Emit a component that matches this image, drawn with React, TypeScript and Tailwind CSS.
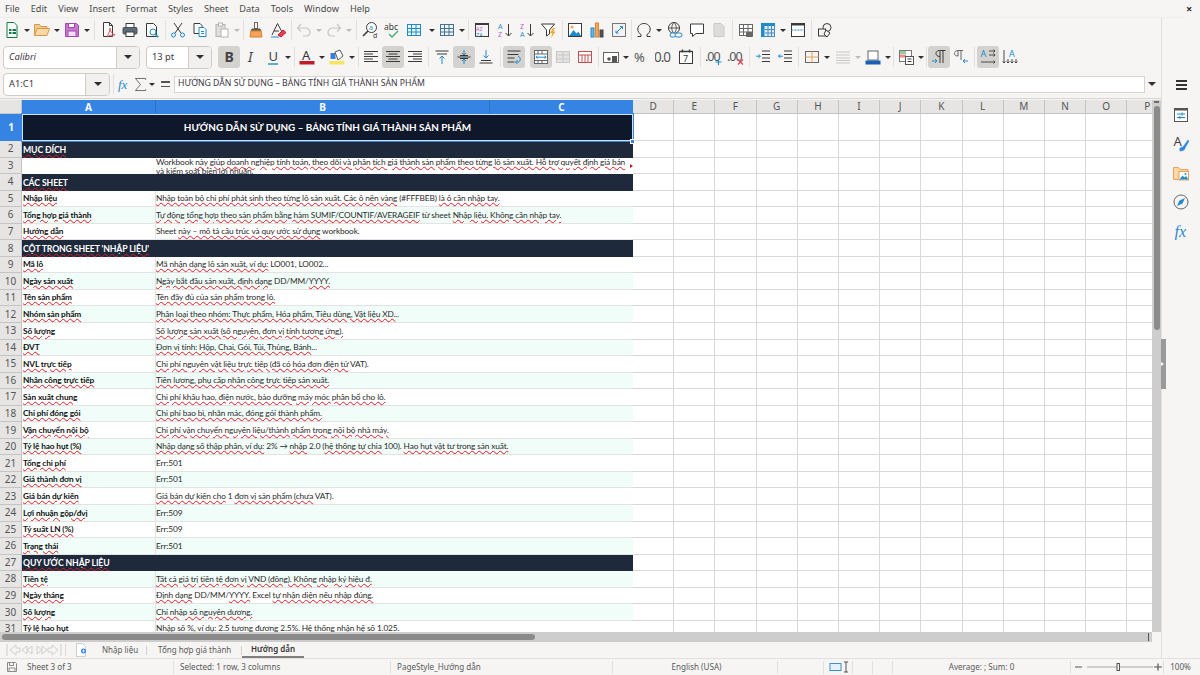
import type { ReactNode } from "react";

const UI = "font-['Noto_Sans',sans-serif]";
const INK = "#3a3a38";
const BLUE = "#1e8bcd";

// ---- toolbar primitives ----
function Btn({ on, children }: { on?: boolean; children: ReactNode }) {
  return (
    <div className={`flex h-[22px] w-[22px] shrink-0 items-center justify-center rounded-[3px] ${on ? "bg-[#d4d2cf]" : ""}`}>
      <svg viewBox="0 0 18 18" className="h-[18px] w-[18px]" fill="none" stroke={INK} strokeWidth="1">
        {children}
      </svg>
    </div>
  );
}

function Dd({ dim }: { dim?: boolean }) {
  return (
    <div className="flex h-[22px] w-[8px] shrink-0 items-center justify-center">
      <div className={`h-0 w-0 border-x-[3px] border-t-[3px] border-x-transparent ${dim ? "border-t-[#bbbbbb]" : "border-t-[#2e2e2e]"}`} />
    </div>
  );
}

function Sep({ w }: { w: string }) {
  return (
    <div className={`flex h-[22px] shrink-0 items-center justify-center ${w}`}>
      <div className="h-[20px] w-px bg-[#e2e0dd]" />
    </div>
  );
}

function Combo({ w, drop, text, italic }: { w: string; drop: string; text: string; italic?: boolean }) {
  return (
    <div className={`flex h-[23px] shrink-0 overflow-hidden rounded-[4px] border border-[#cfcbc6] bg-white ${w}`}>
      <div className={`flex flex-1 items-center pl-[5px] text-[9.300px] text-[#3d3846] ${italic ? "italic" : ""}`}>{text}</div>
      <div className={`flex items-center justify-center border-l border-[#cfcbc6] bg-[#f1f0ee] ${drop}`}>
        <div className="h-0 w-0 border-x-[4px] border-t-[4px] border-x-transparent border-t-[#2e2e2e]" />
      </div>
    </div>
  );
}

const Lines = ({ rows }: { rows: [number, number][] }) => (
  <>
    {rows.map(([a, b], i) => (
      <path key={i} d={`M${a} ${3.5 + i * 2.5}H${b}`} />
    ))}
  </>
);

const TableGlyph = ({ c = INK, fill }: { c?: string; fill?: string }) => (
  <g stroke={c}>
    <rect x="2.5" y="3.5" width="13" height="11" fill={fill ?? "none"} />
    <path d="M2.5 7.5h13M2.5 11h13M6.5 3.5v11M11 3.5v11" />
  </g>
);

function ToolbarOne() {
  return (
    <div className="flex h-[24px] items-center pl-px">
      <Btn>
        <path d="M4 1.5h7l3 3v12H4z" stroke="#107c41" fill="#fff" />
        <rect x="6" y="8" width="7" height="5" fill="#107c41" stroke="none" />
        <path d="M9 8v5M6 10.5h7" stroke="#fff" />
      </Btn>
      <Dd />
      <Btn>
        <path d="M1.5 14.5v-11h5l1.5 2h6v2" stroke="#d49a4a" fill="#f6c98a" />
        <path d="M1.5 14.5l2.5-7h12.5l-2.5 7z" stroke="#d49a4a" fill="#fbd9a6" />
      </Btn>
      <Dd />
      <Btn>
        <path d="M2.5 2.5h11l2 2v11h-13z" fill="#c678c9" stroke="#a347ba" />
        <rect x="5.5" y="2.5" width="6" height="4" fill="#fff" stroke="#a347ba" />
        <rect x="5" y="10" width="8" height="5.5" fill="#f3ddf4" stroke="#a347ba" />
      </Btn>
      <Dd />
      <Sep w="w-[6px]" />
      <Btn>
        <path d="M4.5 1.5h6l3 3v11h-9z" fill="#fff" />
        <path d="M10.5 1.5v3h3" />
        <path d="M8 15c2-2 3-6 3-8 0 3 2 6 5 7-3 0-6 0-8 2" stroke="#e0525d" />
      </Btn>
      <Btn>
        <rect x="5" y="2.5" width="8" height="4" fill="#fff" />
        <rect x="2" y="6.5" width="14" height="6.5" rx="1" fill="#5e6a76" stroke="#4a545e" />
        <rect x="5" y="11" width="8" height="4.5" fill="#fff" />
      </Btn>
      <Btn>
        <path d="M3.5 2.5h7l3 3v10h-10z" fill="#fff" />
        <circle cx="10" cy="11" r="3" stroke={BLUE} />
        <path d="M12.3 13.3l3 3" stroke={BLUE} strokeWidth="1.5" />
      </Btn>
      <Sep w="w-[4px]" />
      <Btn>
        <path d="M5 2l7 10M13 2L6 12" />
        <circle cx="4.5" cy="14" r="2" stroke={BLUE} />
        <circle cx="13.5" cy="14" r="2" stroke={BLUE} />
      </Btn>
      <Btn>
        <path d="M3 2.5h6l2 2v8H3z" fill="#fff" />
        <path d="M8 6.5h5l2 2v7H8z" fill="#fff" stroke={BLUE} />
        <path d="M10 10.5h3M10 12.5h3" stroke={BLUE} />
      </Btn>
      <Btn>
        <g stroke="#b4b4b4">
          <rect x="3" y="3.5" width="9" height="12" fill="#dedede" />
          <rect x="5.5" y="2" width="4" height="3" fill="#fff" />
          <rect x="8" y="8" width="7" height="8" fill="#fff" />
        </g>
      </Btn>
      <Dd dim />
      <Sep w="w-[4px]" />
      <Btn>
        <rect x="7.5" y="1.5" width="3" height="6" stroke="#7a6a55" />
        <path d="M5 8h8l1 2H4z" fill="#6c6a66" stroke="#555" />
        <path d="M4 10h10l1 6H3z" fill="#f5a45a" stroke="#d9822b" />
      </Btn>
      <Btn>
        <path d="M3 14L8.5 2.5 13 11M5 10h5" />
        <path d="M9 14l5-5 3 2.5-5 4.5z" fill="#e0424f" stroke="#c01c28" />
        <path d="M2 16h8" stroke={BLUE} />
      </Btn>
      <Sep w="w-[4px]" />
      <Btn>
        <path d="M6 3L2.5 7 6 10.5M3 7h7c3 0 5 2 5 4s-1 4-4 4H8" stroke="#c6c6c6" strokeWidth="1.2" />
      </Btn>
      <Dd dim />
      <Btn>
        <path d="M12 3l3.5 4-3.5 3.5M15 7H8c-3 0-5 2-5 4s1 4 4 4h3" stroke="#c6c6c6" strokeWidth="1.2" />
      </Btn>
      <Dd dim />
      <Sep w="w-[6px]" />
      <Btn>
        <circle cx="10.5" cy="6.5" r="5" fill="#fff" />
        <path d="M7 10l-5 5" strokeWidth="1.6" />
        <text x="8" y="9" fontSize="7" fill={BLUE} stroke="none">a</text>
        <text x="12" y="16.5" fontSize="7" fill={INK} stroke="none">d</text>
      </Btn>
      <Btn>
        <text x="1" y="9" fontSize="8.5" fill={INK} stroke="none">abc</text>
        <path d="M6 13l3 3 6-6" stroke="#3fae6a" strokeWidth="1.3" />
      </Btn>
      <Btn>
        <TableGlyph c={BLUE} fill="#eaf4fb" />
      </Btn>
      <div className="w-[3px] shrink-0" />
      <Dd />
      <Btn>
        <TableGlyph c="#49708f" fill="#eaf4fb" />
      </Btn>
      <Dd />
      <Sep w="w-[5px]" />
      <Btn>
        <rect x="2.5" y="2.5" width="13" height="13" />
        <path d="M2.5 3h13" strokeWidth="2" />
        <text x="3" y="10" fontSize="5.5" fill="#c061cb" stroke="none">AZ</text>
        <text x="3" y="15.5" fontSize="5.5" fill={BLUE} stroke="none">ZA</text>
      </Btn>
      <div className="w-px shrink-0" />
      <Btn>
        <text x="2" y="8" fontSize="7" fill={BLUE} stroke="none">A</text>
        <text x="2" y="15.5" fontSize="7" fill="#c061cb" stroke="none">Z</text>
        <path d="M12.5 3v12M9.5 12l3 3 3-3" />
      </Btn>
      <Btn>
        <text x="2" y="8" fontSize="7" fill="#c061cb" stroke="none">Z</text>
        <text x="2" y="15.5" fontSize="7" fill={BLUE} stroke="none">A</text>
        <path d="M12.5 3v12M9.5 12l3 3 3-3" />
      </Btn>
      <Btn>
        <path d="M1.5 3h13l-5 6v4l-3 2V9z" fill="#fff" />
        <path d="M13 7l-3 5h2.5L11 17l4.5-6.5H13l2-3.5z" fill="#f5a623" stroke="none" />
      </Btn>
      <Sep w="w-[4px]" />
      <Btn>
        <rect x="2.5" y="2.5" width="13" height="13" fill="#fff" />
        <circle cx="6" cy="6" r="1.5" fill="#f5a45a" stroke="none" />
        <path d="M3 15l4.5-6 3 3.5 2-2 2.5 4.5z" fill={BLUE} stroke="none" />
      </Btn>
      <Btn>
        <rect x="3" y="7" width="3" height="9" fill="#6fb3e0" stroke={BLUE} />
        <rect x="7.5" y="2" width="3" height="14" fill="#f5a45a" stroke="#e0862f" />
        <rect x="12" y="9" width="3" height="7" fill="#555" stroke="#444" />
      </Btn>
      <Btn>
        <rect x="2.5" y="2.5" width="13" height="13" fill="#f2f2f2" stroke="#777" />
        <path d="M6 12l6-6M10 5.500h2.500V8M6 9.500V12h2.500" stroke={BLUE} />
      </Btn>
      <Sep w="w-[3px]" />
      <Btn>
        <path d="M2.500 15.500h3.500v-2c-2-1-3.200-3-3.200-5.500C2.800 5 5.500 2.500 9 2.500S15.200 5 15.200 8c0 2.500-1.200 4.500-3.200 5.500v2h3.500" />
      </Btn>
      <Dd />
      <div className="w-px shrink-0" />
      <Btn>
        <circle cx="8" cy="7" r="5.500" />
        <path d="M2.500 7h11M8 1.500c-3 3-3 8 0 11M8 1.500c3 3 3 8 0 11" strokeWidth="0.8" />
        <rect x="4" y="12" width="6" height="4" rx="2" stroke={BLUE} fill="#f6f5f4" />
        <rect x="9" y="12" width="7" height="4" rx="2" stroke={BLUE} fill="#f6f5f4" />
      </Btn>
      <Btn>
        <path d="M2.500 3h13v9.500H8L4.500 15.500v-3h-2z" fill="#fff" />
      </Btn>
      <Btn>
        <path d="M4 2.500h7l3 3v10H4z" fill="#dcdcdc" stroke="#c8c8c8" />
      </Btn>
      <Sep w="w-[5px]" />
      <Btn>
        <TableGlyph c="#666" fill="#fff" />
        <rect x="9" y="11" width="7" height="5" rx="1" fill="#666" stroke="none" />
      </Btn>
      <Btn>
        <rect x="2.500" y="2.500" width="13" height="13" fill="#dcecf8" stroke="#4a8cc0" />
        <rect x="2" y="2" width="14" height="3" fill={BLUE} stroke="none" />
        <rect x="2" y="2" width="3.500" height="14" fill={BLUE} stroke="none" />
        <path d="M6 8.500h9M6 12h9M9 5v10.500M12.500 5v10.500" stroke="#4a8cc0" />
      </Btn>
      <Dd />
      <Btn>
        <rect x="2.500" y="2.500" width="13" height="13" fill="#fff" />
        <path d="M2.500 3.500h13" strokeWidth="2" />
        <path d="M2.500 9h13" stroke={BLUE} strokeDasharray="2 1" />
      </Btn>
      <Sep w="w-[5px]" />
      <Btn>
        <circle cx="11" cy="6.500" r="4" />
        <rect x="2.500" y="8" width="7" height="7" fill="#f6f5f4" />
        <path d="M10 9l4 3-3 4-3-3z" fill="#f6f5f4" />
      </Btn>
    </div>
  );
}

function ToolbarTwo() {
  return (
    <div className="mt-[2px] flex h-[26px] items-center">
      <div className="w-[3px] shrink-0" />
      <Combo w="w-[137px]" drop="w-[23px]" text="Calibri" italic />
      <div className="w-[6px] shrink-0" />
      <Combo w="w-[66px]" drop="w-[23px]" text="13 pt" />
      <div className="w-[6px] shrink-0" />
      <Btn on>
        <text x="4.500" y="14" fontSize="14" fontWeight="700" fill="#444" stroke="none">B</text>
      </Btn>
      <Btn>
        <text x="6" y="14" fontSize="14" fontStyle="italic" fill="#444" stroke="none">I</text>
      </Btn>
      <Btn>
        <text x="4.500" y="13" fontSize="13" fill="#444" stroke="none">U</text>
        <path d="M4 16h10" stroke={BLUE} strokeWidth="1.400" />
      </Btn>
      <Dd />
      <Sep w="w-[4px]" />
      <Btn>
        <text x="4" y="12" fontSize="13" fill="#333" stroke="none">A</text>
        <rect x="1.500" y="13" width="15" height="3.500" fill="#c01c28" stroke="none" />
      </Btn>
      <Dd />
      <Btn>
        <rect x="2.500" y="5" width="5" height="6" fill="#3b7ddd" stroke="none" />
        <path d="M7 4l5-2 3 6-5 4z" fill="#fff" stroke="#555" />
        <rect x="1.500" y="13" width="15" height="3.500" fill="#f8e45c" stroke="none" />
      </Btn>
      <Dd />
      <Sep w="w-[4px]" />
      <Btn>
        <Lines rows={[[2, 16], [2, 11], [2, 16], [2, 11], [2, 16]]} />
      </Btn>
      <Btn on>
        <Lines rows={[[2, 16], [4.500, 13.500], [2, 16], [4.500, 13.500], [2, 16]]} />
      </Btn>
      <Btn>
        <Lines rows={[[2, 16], [7, 16], [2, 16], [7, 16], [2, 16]]} />
      </Btn>
      <Sep w="w-[5px]" />
      <Btn>
        <path d="M2.500 3h13M4 6h10" />
        <path d="M9 16V8M6.500 10.500L9 8l2.500 2.500" stroke={BLUE} />
      </Btn>
      <Btn on>
        <path d="M2.500 9h13M5 7.500h8M5 10.500h8" />
        <path d="M9 2v5M7 5l2 2 2-2M9 16v-5M7 13l2-2 2 2" stroke={BLUE} />
      </Btn>
      <Btn>
        <path d="M2.500 15h13M4 12.500h10" />
        <path d="M9 2v8M6.500 7.500L9 10l2.500-2.500" stroke={BLUE} />
      </Btn>
      <Sep w="w-[6px]" />
      <Btn on>
        <path d="M2.500 3h13M2.500 6.500h11M2.500 10h7M2.500 14h7" />
        <path d="M13 8.500c3 0 3 5.500 0 5.500h-2M12.500 12l-2 2 2 2" stroke={BLUE} />
      </Btn>
      <div className="w-[5px] shrink-0" />
      <Btn on>
        <rect x="2.500" y="2.500" width="13" height="13" fill="#fff" stroke="#666" />
        <path d="M2.500 6h13M2.500 12.500h13M6 2.500V6M10 2.500V6M6 12.500v3M10 12.500v3" stroke="#666" />
        <path d="M4 9.200h10M4 9.200l1.500-1.500M4 9.200l1.500 1.500M14 9.200l-1.500-1.500M14 9.200l-1.500 1.500" stroke={BLUE} />
      </Btn>
      <Btn>
        <rect x="2.500" y="3.500" width="13" height="11" fill="#e4e4e4" stroke="#c8c8c8" />
        <path d="M2.500 7h13M2.500 11h13M9 3.500v11" stroke="#c8c8c8" />
      </Btn>
      <Btn>
        <rect x="2.500" y="3.500" width="13" height="11" fill="#fff" stroke="#c0504d" />
        <path d="M2.500 7h13M6 7v7.500M9 7v7.500M12 7v7.500" stroke="#c0504d" />
      </Btn>
      <Sep w="w-[4px]" />
      <Btn>
        <rect x="1.500" y="4.500" width="15" height="10" fill="#fff" stroke="#666" />
        <circle cx="7" cy="11" r="1.800" fill="#555" stroke="none" />
        <rect x="10" y="8" width="5" height="6.500" fill="#555" stroke="none" />
      </Btn>
      <Dd />
      <div className="w-px shrink-0" />
      <Btn>
        <text x="1" y="14" fontSize="13" fill="#555" stroke="none">%</text>
      </Btn>
      <Btn>
        <text x="-1" y="14" fontSize="13.500" fill="#555" stroke="none" letterSpacing="-1">0.0</text>
      </Btn>
      <Btn>
        <rect x="2.500" y="3.500" width="13" height="12" fill="#fff" />
        <path d="M2.500 3.500h13M5.500 1.500v3M12.500 1.500v3" strokeWidth="1.400" />
        <text x="6" y="14" fontSize="9" fill={INK} stroke="none">7</text>
      </Btn>
      <Sep w="w-[6px]" />
      <Btn>
        <text x="0" y="13" fontSize="12.500" fill="#555" stroke="none" letterSpacing="-1">.00</text>
        <path d="M13.500 11v6M10.500 14h6" stroke={BLUE} strokeWidth="1.200" />
      </Btn>
      <Btn>
        <text x="0" y="13" fontSize="12.500" fill="#555" stroke="none" letterSpacing="-1">.00</text>
        <path d="M11 11.500l5 5M16 11.500l-5 5" stroke="#e0424f" strokeWidth="1.200" />
      </Btn>
      <Sep w="w-[5px]" />
      <Btn>
        <path d="M8 3h8M8 6.500h8M8 10h8M8 13.500h8" />
        <path d="M2 8.200h4M4.500 6.500l2 1.700-2 1.700" stroke={BLUE} />
      </Btn>
      <Btn>
        <path d="M8 3h8M8 6.500h8M8 10h8M8 13.500h8" />
        <path d="M7 8.200H2.500M4.500 6.500l-2 1.700 2 1.700" stroke={BLUE} />
      </Btn>
      <Sep w="w-[5px]" />
      <Btn>
        <rect x="2.500" y="3.500" width="13" height="11" stroke="#666" />
        <path d="M9 3.500v11M2.500 9h13" stroke="#e9a15b" />
      </Btn>
      <Dd />
      <div className="w-[1px] shrink-0" />
      <Btn>
        <path d="M2 4h14M2 7h14M2 10h14M2 12.500h14M2 15h14" stroke="#c8c8c8" />
      </Btn>
      <Dd dim />
      <Btn>
        <rect x="4" y="3" width="10" height="9" stroke="#666" fill="#fff" />
        <rect x="1.500" y="12.500" width="15" height="4" fill="#1a5fb4" stroke="none" />
      </Btn>
      <Dd />
      <Sep w="w-[3px]" />
      <Btn>
        <rect x="2.500" y="2.500" width="12" height="11" fill="#fff" stroke="#777" />
        <rect x="3" y="3" width="6" height="3" fill="#8fd09a" stroke="none" />
        <rect x="3" y="6.500" width="6" height="3" fill="#ef8a8a" stroke="none" />
        <rect x="8.500" y="8.500" width="8" height="8" fill="#fff" stroke="#555" />
        <path d="M10.500 11h4M10.500 13.500h4" />
      </Btn>
      <Dd />
      <Sep w="w-[3px]" />
      <Btn on>
        <path d="M10 3v12M13 3v12M15.500 2.500H9.500c-2.500 0-3.500 1.500-3.500 3s1 3 4 3" />
        <path d="M2 13h5M5 11l2 2-2 2" stroke={BLUE} />
      </Btn>
      <Btn>
        <path d="M9 3v9M6 3v5c-2.500 0-3.500-1.200-3.500-2.500S3.500 2.500 6 2.500h5" stroke="#666" />
        <path d="M16 13h-5M13 11l-2 2 2 2" stroke={BLUE} />
      </Btn>
      <Sep w="w-[5px]" />
      <Btn on>
        <text x="1.500" y="9" fontSize="9" fill={BLUE} stroke="none">A</text>
        <path d="M10 3h6M14.500 1.500l1.500 1.500-1.500 1.500M10 7h6M14.500 5.500L16 7l-1.500 1.500M2 14h14M14.500 12.500L16 14l-1.500 1.500" strokeWidth="0.900" />
      </Btn>
      <Btn>
        <text x="8" y="9" fontSize="9" fill={BLUE} stroke="none">A</text>
        <path d="M3 2v13M1.500 13.500L3 15l1.500-1.500M7 11v4M5.500 13.500L7 15l1.500-1.500M11 11v4M9.500 13.500L11 15l1.500-1.500M15 11v4M13.500 13.500L15 15l1.500-1.500" strokeWidth="0.900" />
      </Btn>
    </div>
  );
}

function FormulaBar() {
  return (
    <div className="flex h-[28px] items-center pr-[3px]">
      <div className="w-[3px] shrink-0" />
      <Combo w="w-[107px]" drop="w-[24px]" text="A1:C1" />
      <Sep w="w-[7px]" />
      <div className="-ml-[4px]">
        <Btn>
          <text x="3" y="14" fontSize="13" fontStyle="italic" fontFamily="Liberation Serif" fill={BLUE} stroke="none">fx</text>
        </Btn>
      </div>
      <div className="-ml-[5px] flex w-[20px] justify-center">
        <svg viewBox="0 0 14 16" className="h-[15px] w-[13px]" fill="none" stroke="#666" strokeWidth="1">
          <path d="M12.500 3V1.500h-11L7 8l-5.500 6.500h11V13" />
        </svg>
      </div>
      <div className="-ml-[2px]">
        <Dd />
      </div>
      <div className="flex w-[18px] flex-col items-center gap-[3px]">
        <div className="h-[1.5px] w-[9px] bg-[#555]" />
        <div className="h-[1.5px] w-[9px] bg-[#555]" />
      </div>
      <div className="flex h-[17px] flex-1 items-center border border-[#d8d5d1] bg-white pl-[3px] text-[8.700px] text-[#3d3846]">
        HƯỚNG DẪN SỬ DỤNG – BẢNG TÍNH GIÁ THÀNH SẢN PHẨM
      </div>
      <div className="flex w-[13px] justify-center">
        <div className="h-0 w-0 border-x-[4px] border-t-[4px] border-x-transparent border-t-[#2e2e2e]" />
      </div>
    </div>
  );
}

// ---- sheet ----
// "|" switches the spell-check squiggle off and on, starting with it on
function Spell({ t }: { t: string }) {
  return (
    <>
      {t.split("|").map((part, i) =>
        i % 2 === 0 ? (
          <span key={i} className="underline decoration-[#e01b24] decoration-wavy decoration-1 underline-offset-1">
            {part}
          </span>
        ) : (
          <span key={i}>{part}</span>
        ),
      )}
    </>
  );
}

type Row = { a?: string; b?: string; mint?: boolean; head?: boolean; tall?: boolean };

const rows: Row[] = [
  { a: "MỤC ĐÍCH", head: true },
  { tall: true },
  { a: "CÁC SHEET", head: true },
  { a: "Nhập liệu", b: "Nhập toàn bộ chi phí phát sinh theo từng lô sản xuất. Các ô nền vàng| (#FFFBEB) |là ô cần nhập tay." },
  { a: "Tổng hợp giá thành", b: "Tự động tổng hợp theo sản phẩm bằng hàm SUMIF/COUNTIF/AVERAGEIF| từ sheet |Nhập liệu. Không cần nhập tay.", mint: true },
  { a: "Hướng dẫn", b: "|Sheet |này – mô tả cấu trúc và quy ước sử dụng| workbook." },
  { a: "CỘT TRONG SHEET 'NHẬP LIỆU'", head: true },
  { a: "Mã lô", b: "Mã nhận dạng lô sản xuất, ví dụ:| LO001, LO002..." },
  { a: "Ngày sản xuất", b: "Ngày bắt đầu sản xuất, định dạng| DD/MM/|YYYY.", mint: true },
  { a: "Tên sản phẩm", b: "Tên đầy đủ của sản phẩm trong lô." },
  { a: "Nhóm sản phẩm", b: "Phân loại theo nhóm: Thực phẩm, Hóa phẩm, Tiêu dùng, Vật liệu XD.|..", mint: true },
  { a: "Số lượng", b: "Số lượng sản xuất (số nguyên, đơn vị tính tương ứng)." },
  { a: "ĐVT", b: "Đơn vị tính: Hộp, Chai, Gói, Túi, Thùng, Bánh|...", mint: true },
  { a: "NVL trực tiếp", b: "Chi phí nguyên vật liệu trực tiếp (đã có hóa đơn điện tử| VAT)." },
  { a: "Nhân công trực tiếp", b: "Tiền lương, phụ cấp nhân công trực tiếp sản xuất.", mint: true },
  { a: "Sản xuất chung", b: "Chi phí khấu hao, điện nước, bảo dưỡng máy móc phân bổ cho lô." },
  { a: "Chi phí đóng gói", b: "Chi phí bao bì, nhãn mác, đóng gói thành phẩm.", mint: true },
  { a: "Vận chuyển nội bộ", b: "Chi phí vận chuyển nguyên liệu/thành phẩm trong nội bộ nhà máy." },
  { a: "Tỷ lệ hao hụt (%)", b: "Nhập dạng số thập phân, ví dụ:| 2% → |nhập| 2.0 (|hệ thống tự chia| 100). |Hao hụt vật tư trong sản xuất.", mint: true },
  { a: "Tổng chi phí", b: "|Err:501" },
  { a: "Giá thành đơn vị", b: "|Err:501", mint: true },
  { a: "Giá bán dự kiến", b: "Giá bán dự kiến cho| 1 |đơn vị sản phẩm (chưa| VAT)." },
  { a: "Lợi nhuận gộp/đvị", b: "|Err:509", mint: true },
  { a: "Tỷ suất LN (%)", b: "|Err:509" },
  { a: "Trạng thái", b: "|Err:501", mint: true },
  { a: "QUY ƯỚC NHẬP LIỆU", head: true },
  { a: "Tiền tệ", b: "Tất cả giá trị tiền tệ đơn vị VND (đồng). Không nhập ký hiệu đ.", mint: true },
  { a: "Ngày tháng", b: "Định dạng| DD/MM/|YYYY.| Excel |tự nhận diện nếu nhập đúng." },
  { a: "Số lượng", b: "Chỉ nhập số nguyên dương.", mint: true },
  { a: "Tỷ lệ hao hụt", b: "Nhập số %, ví dụ:| 2.5 |tương đương| 2.5%. |Hệ thống nhận hệ số| 1.025." },
];

const extraCols = ["D", "E", "F", "G", "H", "I", "J", "K", "L", "M", "N", "O", "P"];
const CELL = "font-['Lato',sans-serif] text-[8.300px] tracking-[-0.13px] text-[#111]";

function EmptyCells() {
  return (
    <>
      {extraCols.map((c) => (
        <div key={c} className="h-full w-[41.200px] shrink-0 border-r border-b border-[#d9d9d9] bg-white" />
      ))}
    </>
  );
}

function RowNum({ n }: { n: number }) {
  return (
    <div className="flex h-full w-[22px] shrink-0 items-center justify-center border-r border-b border-[#c4c4c4] bg-[#e6e5e3] text-[10px] text-[#555]">
      {n}
    </div>
  );
}

function Sheet() {
  return (
    <div className="flex min-h-0 flex-1 flex-col">
      <div className="flex h-[2px] shrink-0 border-t border-[#d8d5d1]" />
      <div className="flex min-h-0 flex-1">
        <div className="min-w-0 flex-1 overflow-hidden bg-white">
          {/* column headers */}
          <div className="flex h-[14px] text-[10px] font-bold">
            <div className="w-[22px] shrink-0 border-r border-b border-[#c4c4c4] bg-[#e6e5e3]" />
            <div className="flex w-[134px] shrink-0 items-center justify-center border-r border-[#2a6fc4] bg-[#3584e4] text-white">A</div>
            <div className="flex w-[334px] shrink-0 items-center justify-center border-r border-[#2a6fc4] bg-[#3584e4] text-white">B</div>
            <div className="flex w-[143px] shrink-0 items-center justify-center bg-[#3584e4] text-white">C</div>
            {extraCols.map((c) => (
              <div key={c} className="flex w-[41.200px] shrink-0 items-center justify-center border-r border-b border-[#c4c4c4] bg-[#e6e5e3] font-normal text-[#555]">
                {c}
              </div>
            ))}
          </div>
          {/* merged title row */}
          <div className="relative flex h-[27px]">
            <div className="flex h-full w-[22px] shrink-0 items-center justify-center bg-[#3584e4] text-[10px] font-bold text-white">1</div>
            <div className="flex h-full w-[611px] shrink-0 items-center justify-center bg-[#0f172a] font-['Lato',sans-serif] text-[9.900px] font-bold text-white">
              HƯỚNG DẪN SỬ DỤNG – BẢNG TÍNH GIÁ THÀNH SẢN PHẨM
            </div>
            <EmptyCells />
            <div className="pointer-events-none absolute top-0 left-[22px] h-[27px] w-[611px] border border-[#cfe2f8] outline outline-[#3584e4]" />
            <div className="absolute top-[24.500px] left-[630px] h-[5px] w-[5px] border border-white bg-[#3584e4]" />
          </div>
          {rows.map((r, i) => (
            <div key={i} className="flex h-[16.550px]">
              <RowNum n={i + 2} />
              {r.head ? (
                <div className={`${CELL} flex h-full w-[611px] shrink-0 items-center bg-[#1e293b] pl-[1px] !text-[8.700px] font-bold !text-white`}>
                  <Spell t={r.a ?? ""} />
                </div>
              ) : r.tall ? (
                <>
                  <div className="h-full w-[134px] shrink-0 bg-white" />
                  <div className={`${CELL} relative h-full w-[477px] shrink-0 overflow-hidden bg-white !text-[#2a2a2a]`}>
                    <div className="whitespace-nowrap leading-[9px]">
                      <Spell t="|Workbook |này giúp doanh nghiệp tính toán, theo dõi và phân tích giá thành sản phẩm theo từng lô sản xuất. Hỗ trợ quyết định giá bán" />
                    </div>
                    <div className="whitespace-nowrap leading-[9px]">
                      <Spell t="và kiểm soát biên lợi nhuận." />
                    </div>
                    <div className="absolute top-[6px] right-0 h-0 w-0 border-y-[2px] border-l-[3px] border-y-transparent border-l-[#c01c28]" />
                  </div>
                </>
              ) : (
                <>
                  <div className={`${CELL} flex h-full w-[134px] shrink-0 items-center border-r border-b border-[#e3e3e3] pl-[1px] font-bold ${r.mint ? "bg-[#f0fdf9]" : "bg-white"}`}>
                    <span className="whitespace-nowrap">
                      <Spell t={r.a ?? ""} />
                    </span>
                  </div>
                  <div className={`${CELL} flex h-full w-[477px] shrink-0 items-center border-b border-[#e3e3e3] !text-[#2a2a2a] ${r.mint ? "bg-[#f0fdf9]" : "bg-white"}`}>
                    <span className="whitespace-nowrap">
                      <Spell t={r.b ?? ""} />
                    </span>
                  </div>
                </>
              )}
              <EmptyCells />
            </div>
          ))}
        </div>
        {/* vertical scrollbar */}
        <div className="flex w-[9px] shrink-0 flex-col items-center bg-[#cdcdcd]">
          <div className="mt-px h-[2px] w-[5px] bg-[#6e6e6e]" />
          <div className="mt-[3px] h-[224px] w-[6px] rounded-[3px] bg-[#8a8a8a]" />
        </div>
      </div>
    </div>
  );
}

function HScroll() {
  return (
    <div className="mr-[9px] flex h-[10px] shrink-0 items-center justify-between bg-[#cdcdcd] pr-[3px] pl-[2px]">
      <div className="h-[6px] w-[533px] rounded-[3px] bg-[#8a8a8a]" />
      <div className="h-[8px] w-px bg-[#555]" />
    </div>
  );
}

function Tabs() {
  return (
    <div className="flex h-[16px] shrink-0 items-center text-[8px] text-[#5a5a5a]">
      <svg viewBox="0 0 56 14" className="ml-[6px] h-[14px] w-[56px]" fill="none" stroke="#cfcfcf" strokeWidth="1">
        <path d="M1 1v12M10 2L4 7l6 5v-3h4V5h-4zM21 3l-5 4 5 4zM26 3l-5 4 5 4zM31 3l5 4-5 4zM36 3l5 4-5 4zM46 2l6 5-6 5V9h-4V5h4zM55 1v12" />
      </svg>
      <div className="ml-[3px] h-[12px] w-px bg-[#dcdcdc]" />
      <svg viewBox="0 0 12 14" className="ml-[9px] h-[14px] w-[12px]" fill="none">
        <path d="M1.500 .5h6l3 3v10h-9z" fill="#fff" stroke="#cfcfcf" />
        <circle cx="8.500" cy="8" r="2.500" fill="#3584e4" />
        <path d="M7 8h3M8.500 6.500v3" stroke="#fff" strokeWidth="0.700" />
      </svg>
      <div className="ml-[15px] w-[36px] whitespace-nowrap text-center">Nhập liệu</div>
      <div className="ml-[8px] h-[9px] w-px bg-[#d0d0d0]" />
      <div className="ml-[11px] w-[72px] whitespace-nowrap text-center">Tổng hợp giá thành</div>
      <div className="ml-[11px] h-[9px] w-px bg-[#d0d0d0]" />
      <div className="flex h-full w-[62px] items-center justify-center border-b-2 border-[#808080] font-semibold text-[#333]">Hướng dẫn</div>
    </div>
  );
}

function SideIcon({ children }: { children: ReactNode }) {
  return (
    <div className="flex h-[29px] w-full items-center justify-center">
      <svg viewBox="0 0 18 18" className="h-[18px] w-[18px]" fill="none" stroke={INK} strokeWidth="1">
        {children}
      </svg>
    </div>
  );
}

function Sidebar() {
  return (
    <div className="relative flex w-[39px] shrink-0 flex-col items-center border-l border-[#e2e0dd] pt-[62px]">
      <div className="mb-[11px] flex flex-col gap-[2.500px]">
        <div className="h-[1.500px] w-[11px] bg-[#333]" />
        <div className="h-[1.500px] w-[11px] bg-[#333]" />
        <div className="h-[1.500px] w-[11px] bg-[#333]" />
      </div>
      <SideIcon>
        <rect x="2.500" y="2.500" width="13" height="13" fill="#fff" stroke="#555" />
        <path d="M2.500 3.500h13" stroke="#555" strokeWidth="2" />
        <path d="M5 8h8M5 11.500h8" stroke={BLUE} />
        <path d="M10 6.500v3M8 10v3" stroke={BLUE} />
      </SideIcon>
      <SideIcon>
        <text x="1.500" y="11" fontSize="13" fill="#444" stroke="none">A</text>
        <path d="M8 16c-1-3 1-4 3-4l5-7 1 1-4 7c0 2-2 3-5 3z" fill="#3584e4" stroke="#1e8bcd" strokeWidth="0.500" />
      </SideIcon>
      <SideIcon>
        <path d="M1.500 15.500v-12h5l1.500 2h8v10z" fill="#fbd9a6" stroke="#e9a15b" />
        <rect x="7" y="7.500" width="9.500" height="8.500" fill="#fff" stroke="#e9a15b" />
        <path d="M7.500 15.500l3-4 2 2 1.500-1.500 2.500 3.500z" fill="#1e8bcd" stroke="none" />
        <circle cx="13.500" cy="10" r="1" fill="#1e8bcd" stroke="none" />
      </SideIcon>
      <SideIcon>
        <circle cx="9" cy="9" r="7" stroke="#666" />
        <path d="M13 5l-2.500 5.500L5 13l2.500-5.500z" fill="#1e8bcd" stroke="none" />
      </SideIcon>
      <SideIcon>
        <text x="2.500" y="15" fontSize="16" fontStyle="italic" fontFamily="Liberation Serif" fill="#1e8bcd" stroke="none">fx</text>
      </SideIcon>
      {/* deck handle */}
      <div className="absolute top-[321px] -left-px flex h-[50px] w-[5px] items-center bg-[#9a9a9a]">
        <div className="h-0 w-0 border-y-[2px] border-l-[3px] border-y-transparent border-l-white" />
      </div>
    </div>
  );
}

function StatusDiv() {
  return <div className="h-[13px] w-px shrink-0 bg-[#e2e0dd]" />;
}

function Status() {
  return (
    <div className="flex h-[17px] shrink-0 items-center border-t border-[#e2e0dd] text-[8.100px] whitespace-nowrap text-[#5a5a5a]">
      <svg viewBox="0 0 12 12" className="ml-[6px] h-[12px] w-[12px]" fill="none" stroke="#8a8a8a">
        <path d="M1.500 1.500h8l1 1v8h-9z" />
        <path d="M3.500 1.500v3h4v-3M3 10.500V7h6v3.500" />
      </svg>
      <div className="ml-[9px] w-[146px]">Sheet 3 of 3</div>
      <StatusDiv />
      <div className="ml-[6px] w-[210px]">Selected: 1 row, 3 columns</div>
      <StatusDiv />
      <div className="ml-[6px] w-[215px]">PageStyle_Hướng dẫn</div>
      <StatusDiv />
      <div className="w-[164px] pl-[3px] text-center">English (USA)</div>
      <StatusDiv />
      <div className="w-[45px]" />
      <StatusDiv />
      <svg viewBox="0 0 28 12" className="h-[12px] w-[28px]" fill="none">
        <rect x="6" y="2.500" width="11" height="7" fill="#e6f2fb" stroke="#3f8fc7" />
        <path d="M20 1h4M22 1v10M20 11h4" stroke="#555" />
      </svg>
      <StatusDiv />
      <div className="w-[19px]" />
      <StatusDiv />
      <div className="w-[19px]" />
      <StatusDiv />
      <div className="w-[177px] text-center">Average: ; Sum: 0</div>
      <StatusDiv />
      <svg viewBox="0 0 92 12" className="h-[12px] w-[92px]" fill="none" stroke="#555">
        <path d="M4 6h7M83 6h8M87 2.500v7" strokeWidth="1.200" />
        <path d="M16 6h66" stroke="#aaa" />
        <rect x="46" y="2.500" width="2.500" height="7" fill="#f6f5f4" />
      </svg>
      <StatusDiv />
      <div className="w-[33px] text-center">100%</div>
    </div>
  );
}

export default function App() {
  return (
    <div className={`${UI} flex h-[675px] w-[1200px] flex-col overflow-hidden bg-[#f6f5f4]`}>
      {/* menu bar */}
      <div className="flex h-[18px] shrink-0 items-center text-[9.200px] text-[#4a4a4a]">
        <div className="flex h-full w-[1184px] items-center gap-[11px] border-b border-[#eeedeb] pl-[5px]">
          {["File", "Edit", "View", "Insert", "Format", "Styles", "Sheet", "Data", "Tools", "Window", "Help"].map((m) => (
            <span key={m}>{m}</span>
          ))}
        </div>
        <span className="ml-[2px] text-[11px] font-bold text-[#333]">×</span>
      </div>
      <div className="flex min-h-0 flex-1">
        <div className="flex min-w-0 flex-1 flex-col">
          <ToolbarOne />
          <ToolbarTwo />
          <FormulaBar />
          <Sheet />
          <HScroll />
          <Tabs />
        </div>
        <Sidebar />
      </div>
      <Status />
    </div>
  );
}
